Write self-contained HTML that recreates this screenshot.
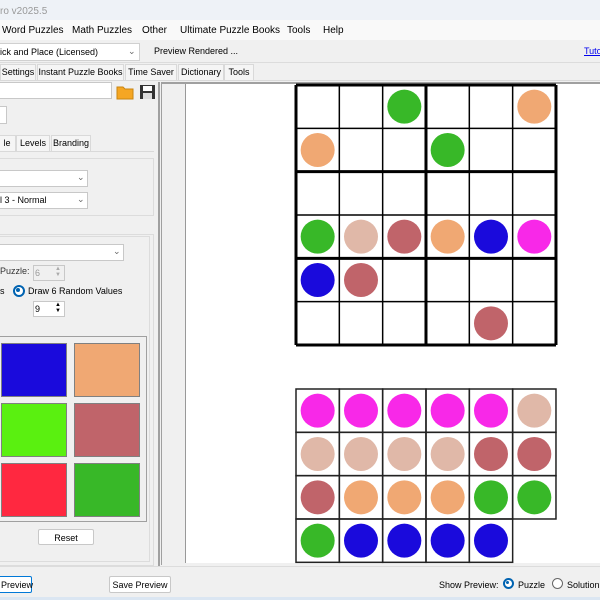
<!DOCTYPE html>
<html><head><meta charset="utf-8"><style>
body{margin:0;width:600px;height:600px;overflow:hidden;background:#f0f0f0;font-family:"Liberation Sans",sans-serif;font-size:9px;color:#000;position:relative}
.a{position:absolute;white-space:nowrap}
.box{position:absolute;background:#fff;border:1px solid #c8c8c8;box-sizing:border-box;white-space:nowrap}
.grp{position:absolute;border:1px solid #dcdcdc;box-sizing:border-box}
.tab{position:absolute;top:64px;height:16px;border:1px solid #d9d9d9;border-bottom:none;box-sizing:border-box;background:#f5f5f5;padding:2px 0 0;text-align:center;font-size:9px;white-space:nowrap;overflow:hidden}
.sw{position:absolute;border:1px solid #808080;box-sizing:border-box}
.chev{position:absolute;color:#666;font-size:9px}
</style></head><body>
<div class="a" style="left:0;top:0;width:600px;height:20px;background:#eef2f7"></div>
<div class="a" style="left:0;top:6px;color:#999;font-size:10px">ro v2025.5</div>
<div class="a" style="left:0;top:20px;width:600px;height:20px;background:#f9f9f9"></div>
<div class="a" style="left:2px;top:25px;font-size:10px">Word Puzzles</div>
<div class="a" style="left:72px;top:25px;font-size:10px">Math Puzzles</div>
<div class="a" style="left:142px;top:25px;font-size:10px">Other</div>
<div class="a" style="left:180px;top:25px;font-size:10px">Ultimate Puzzle Books</div>
<div class="a" style="left:287px;top:25px;font-size:10px">Tools</div>
<div class="a" style="left:323px;top:25px;font-size:10px">Help</div>
<div class="box" style="left:-2px;top:43px;width:142px;height:18px;border-color:#d0d0d0"></div>
<div class="a" style="left:0;top:47px">ick and Place (Licensed)</div>
<div class="chev" style="left:128px;top:46px">&#8964;</div>
<div class="a" style="left:154px;top:46px">Preview Rendered ...</div>
<div class="a" style="left:584px;top:46px;color:#0000ee;text-decoration:underline">Tuto</div>
<div class="a" style="left:0;top:62px;width:600px;height:1px;background:#dcdcdc"></div>
<div class="tab" style="left:0;width:36px">Settings</div>
<div class="tab" style="left:37px;width:87px">Instant Puzzle Books</div>
<div class="tab" style="left:125px;width:52px">Time Saver</div>
<div class="tab" style="left:178px;width:46px">Dictionary</div>
<div class="tab" style="left:224px;width:30px">Tools</div>
<div class="a" style="left:0;top:80px;width:600px;height:1px;background:#d9d9d9"></div>
<!-- left panel -->
<div class="box" style="left:-2px;top:82px;width:114px;height:17px"></div>
<svg class="a" style="left:116px;top:84px" width="18" height="16"><path d="M1 3h6l2 2h8v10H1z" fill="#f5a623" stroke="#c98511"/></svg>
<svg class="a" style="left:139px;top:84px" width="17" height="16"><rect x="1" y="1" width="15" height="14" fill="#333"/><rect x="4" y="2" width="9" height="5" fill="#fff"/><rect x="4" y="9" width="9" height="6" fill="#ddd"/></svg>
<div class="box" style="left:-2px;top:106px;width:9px;height:18px"></div>
<div class="tab" style="left:-2px;top:135px;width:18px">le</div>
<div class="tab" style="left:16px;top:135px;width:34px">Levels</div>
<div class="tab" style="left:51px;top:135px;width:40px">Branding</div>
<div class="a" style="left:0;top:151px;width:154px;height:1px;background:#d9d9d9"></div>
<div class="grp" style="left:-2px;top:158px;width:156px;height:58px"></div>
<div class="box" style="left:-2px;top:170px;width:90px;height:17px"></div><div class="chev" style="left:77px;top:172px">&#8964;</div>
<div class="box" style="left:-2px;top:192px;width:90px;height:17px"></div><div class="a" style="left:0;top:195px">l 3 - Normal</div><div class="chev" style="left:77px;top:194px">&#8964;</div>
<div class="grp" style="left:-2px;top:234px;width:156px;height:332px"></div>
<div class="grp" style="left:-2px;top:236px;width:152px;height:326px"></div>
<div class="box" style="left:-2px;top:244px;width:126px;height:17px"></div><div class="chev" style="left:113px;top:246px">&#8964;</div>
<div class="a" style="left:0;top:266px;color:#333">Puzzle:</div>
<div class="box" style="left:33px;top:265px;width:32px;height:16px;background:#f0f0f0"></div><div class="a" style="left:35px;top:268px;color:#999">6</div>
<div class="a" style="left:0;top:286px">s</div>
<div class="a" style="left:13px;top:285px;width:8px;height:8px;border-radius:50%;border:2px solid #0063b1;background:#fff"></div>
<div class="a" style="left:16px;top:288px;width:4px;height:4px;border-radius:50%;background:#0063b1"></div>
<div class="a" style="left:28px;top:286px">Draw 6 Random Values</div>
<div class="box" style="left:33px;top:301px;width:32px;height:16px"></div><div class="a" style="left:35px;top:304px">9</div>
<div class="a" style="left:55px;top:302px;font-size:6px">▲<br>▼</div>
<div class="a" style="left:55px;top:266px;font-size:6px;color:#aaa">▲<br>▼</div>
<div class="grp" style="left:-2px;top:336px;width:149px;height:186px;border-color:#a0a0a0"></div>
<div class="sw" style="left:1px;top:343px;width:66px;height:54px;background:#1a0adc"></div>
<div class="sw" style="left:74px;top:343px;width:66px;height:54px;background:#f0a873"></div>
<div class="sw" style="left:1px;top:403px;width:66px;height:54px;background:#5af010"></div>
<div class="sw" style="left:74px;top:403px;width:66px;height:54px;background:#c0646a"></div>
<div class="sw" style="left:1px;top:463px;width:66px;height:54px;background:#ff2840"></div>
<div class="sw" style="left:74px;top:463px;width:66px;height:54px;background:#38b828"></div>
<div class="box" style="left:38px;top:529px;width:56px;height:16px;border-radius:2px;text-align:center;padding-top:3px">Reset</div>
<div class="a" style="left:158px;top:82px;width:2px;height:484px;background:#a0a0a0"></div>
<!-- preview -->
<div class="a" style="left:161px;top:82px;width:439px;height:483px;background:#f0f0f0;border-top:2px solid #a0a0a0;border-left:1px solid #a0a0a0;box-sizing:border-box"></div>
<div class="a" style="left:185px;top:84px;width:415px;height:479px;background:#fff;border-left:1px solid #999"></div>
<svg class="a" style="left:0;top:0" width="600" height="600" id="g"></svg>
<!-- bottom -->
<div class="a" style="left:0;top:566px;width:600px;height:1px;background:#dcdcdc"></div>
<div class="box" style="left:-10px;top:576px;width:42px;height:17px;border-color:#0078d7;border-radius:2px;padding:3px 0 0 10px">Preview</div>
<div class="box" style="left:109px;top:576px;width:62px;height:17px;border-radius:2px;padding-top:3px;text-align:center">Save Preview</div>
<div class="a" style="left:439px;top:580px">Show Preview:</div>
<div class="a" style="left:503px;top:578px;width:7px;height:7px;border-radius:50%;border:2px solid #0063b1;background:#fff"></div>
<div class="a" style="left:506px;top:581px;width:3px;height:3px;border-radius:50%;background:#0063b1"></div>
<div class="a" style="left:518px;top:580px">Puzzle</div>
<div class="a" style="left:552px;top:578px;width:9px;height:9px;border-radius:50%;border:1px solid #666;background:#fff"></div>
<div class="a" style="left:567px;top:580px">Solution</div>
<div class="a" style="left:0;top:597px;width:600px;height:3px;background:#dbe6f2"></div>
<script>
var C={g:"#38b828",o:"#f0a873",b:"#1a0adc",m:"#f828e8",p:"#e0b8a8",r:"#c0646a"};
var s="",w=43.33,x0=296,y0=85;
var g1=["..g..o","o..g..","......","gprobm","br....","....r."];
for(var r=0;r<6;r++)for(var c=0;c<6;c++){var ch=g1[r][c];if(C[ch])s+='<circle cx="'+(x0+c*w+w/2)+'" cy="'+(y0+r*w+w/2)+'" r="17" fill="'+C[ch]+'"/>';}
for(var i=0;i<=6;i++){var t=(i%3==0)?3:1.5;s+='<line x1="'+(x0+i*w)+'" y1="'+y0+'" x2="'+(x0+i*w)+'" y2="'+(y0+6*w)+'" stroke="#000" stroke-width="'+t+'"/>';var t2=(i%2==0)?3:1.5;s+='<line x1="'+x0+'" y1="'+(y0+i*w)+'" x2="'+(x0+6*w)+'" y2="'+(y0+i*w)+'" stroke="#000" stroke-width="'+t2+'"/>';}
var g2=["mmmmmp","pppprr","rooogg","gbbbb"];
var y1=389;
for(var r=0;r<4;r++){var row=g2[r];for(var c=0;c<row.length;c++){var X=x0+c*w,Y=y1+r*w;s+='<rect x="'+X+'" y="'+Y+'" width="'+w+'" height="'+w+'" fill="none" stroke="#222" stroke-width="1.5"/>';s+='<circle cx="'+(X+w/2)+'" cy="'+(Y+w/2)+'" r="17" fill="'+C[row[c]]+'"/>';}}
document.getElementById("g").innerHTML=s;
</script>
</body></html>
